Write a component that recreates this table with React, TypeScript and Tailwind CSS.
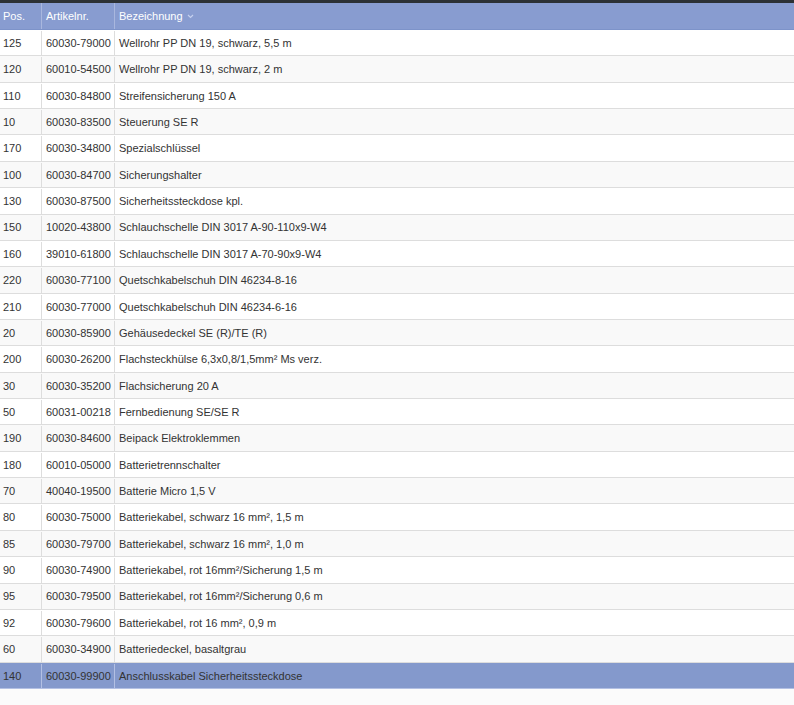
import React from 'react';

const rows: [string, string, string][] = [
  ['125', '60030-79000', 'Wellrohr PP DN 19, schwarz, 5,5 m'],
  ['120', '60010-54500', 'Wellrohr PP DN 19, schwarz, 2 m'],
  ['110', '60030-84800', 'Streifensicherung 150 A'],
  ['10', '60030-83500', 'Steuerung SE R'],
  ['170', '60030-34800', 'Spezialschlüssel'],
  ['100', '60030-84700', 'Sicherungshalter'],
  ['130', '60030-87500', 'Sicherheitssteckdose kpl.'],
  ['150', '10020-43800', 'Schlauchschelle DIN 3017 A-90-110x9-W4'],
  ['160', '39010-61800', 'Schlauchschelle DIN 3017 A-70-90x9-W4'],
  ['220', '60030-77100', 'Quetschkabelschuh DIN 46234-8-16'],
  ['210', '60030-77000', 'Quetschkabelschuh DIN 46234-6-16'],
  ['20', '60030-85900', 'Gehäusedeckel SE (R)/TE (R)'],
  ['200', '60030-26200', 'Flachsteckhülse 6,3x0,8/1,5mm² Ms verz.'],
  ['30', '60030-35200', 'Flachsicherung 20 A'],
  ['50', '60031-00218', 'Fernbedienung SE/SE R'],
  ['190', '60030-84600', 'Beipack Elektroklemmen'],
  ['180', '60010-05000', 'Batterietrennschalter'],
  ['70', '40040-19500', 'Batterie Micro 1,5 V'],
  ['80', '60030-75000', 'Batteriekabel, schwarz 16 mm², 1,5 m'],
  ['85', '60030-79700', 'Batteriekabel, schwarz 16 mm², 1,0 m'],
  ['90', '60030-74900', 'Batteriekabel, rot 16mm²/Sicherung 1,5 m'],
  ['95', '60030-79500', 'Batteriekabel, rot 16mm²/Sicherung 0,6 m'],
  ['92', '60030-79600', 'Batteriekabel, rot 16 mm², 0,9 m'],
  ['60', '60030-34900', 'Batteriedeckel, basaltgrau'],
  ['140', '60030-99900', 'Anschlusskabel Sicherheitssteckdose'],
];

const App = () => {
  return (
    <div className="w-[794px] h-[705px] overflow-hidden bg-[#fbfbfb] font-['Liberation_Sans',Arial,sans-serif] text-[11px]">
      <div className="h-[3px] bg-[#2c3135]" />

      {/* header */}
      <div className="flex h-[27px] bg-[#889cd0] text-white border-b border-[#7d93c9]">
        <div className="w-[42px] flex items-center pl-[3px] border-r border-[#a9b7de]">Pos.</div>
        <div className="w-[73px] flex items-center pl-[4px] border-r border-[#a9b7de]">Artikelnr.</div>
        <div className="flex-1 flex items-center pl-[4px] gap-[4px]">
          Bezeichnung
          <svg width="7" height="5" viewBox="0 0 7 5" className="mt-[1px]">
            <path d="M1 1 L3.5 3.5 L6 1" stroke="#c5d0ee" strokeWidth="1.2" fill="none" />
          </svg>
        </div>
      </div>

      {rows.map(([pos, art, name], i) => {
        const selected = i === rows.length - 1;
        const bg = selected ? 'bg-[#8499cc]' : i % 2 === 1 ? 'bg-[#f9f9f9]' : 'bg-white';
        const line = selected ? 'border-[#b3c0e3]' : 'border-[#dddddd]';
        return (
          <div key={i} className={`flex h-[26.36px] pt-px border-b ${line} ${bg} text-[#333333]`}>
            <div className={`w-[42px] flex items-center pl-[3px] border-r ${line}`}>{pos}</div>
            <div className={`w-[73px] flex items-center pl-[4px] border-r ${line}`}>{art}</div>
            <div className="flex-1 flex items-center pl-[4px]">{name}</div>
          </div>
        );
      })}
    </div>
  );
};

export default App;
